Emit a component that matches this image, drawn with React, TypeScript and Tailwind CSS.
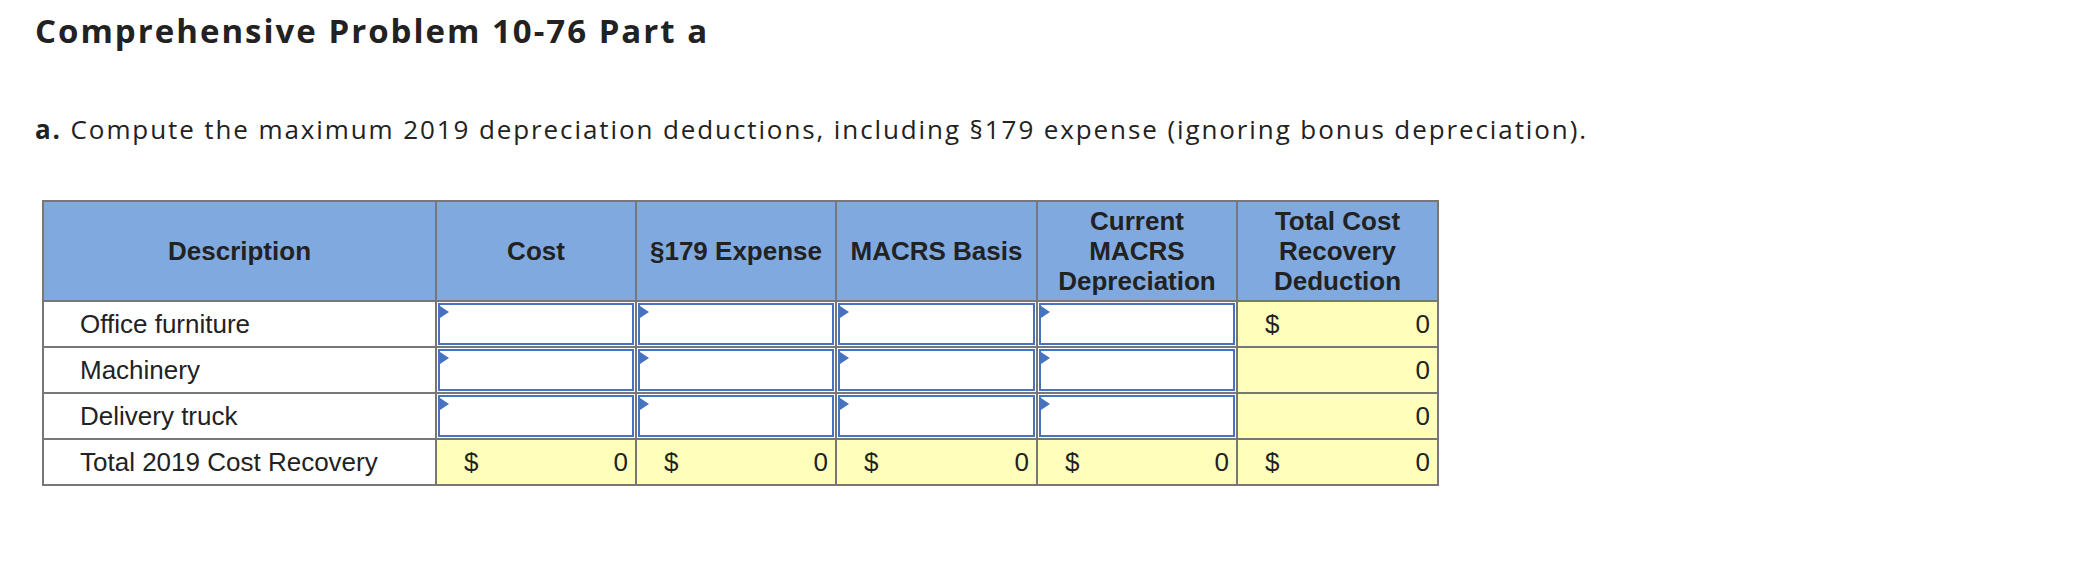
import React from 'react';

const columns = ['Cost', '§179 Expense', 'MACRS Basis', 'Current MACRS Depreciation', 'Total Cost Recovery Deduction'];

const rows = [
  { label: 'Office furniture', showDollar: true },
  { label: 'Machinery', showDollar: false },
  { label: 'Delivery truck', showDollar: false },
];

function InputCell() {
  return (
    <div className="bg-white p-px">
      <div className="relative h-full border-2 border-[#4673bd] bg-white">
        {/* little flag marking an entry field */}
        <span className="absolute left-0 top-[1px] h-0 w-0 border-y-[6px] border-l-[9px] border-y-transparent border-l-[#4673bd]" />
      </div>
    </div>
  );
}

function AmountCell({ dollar, value }: { dollar: boolean; value: string }) {
  return (
    <div className="flex items-center justify-between bg-[#ffffbb] pl-[27px] pr-[7px]">
      <span>{dollar ? '$' : ''}</span>
      <span>{value}</span>
    </div>
  );
}

export default function App() {
  return (
    <div className="min-h-[582px] w-[2084px] bg-white pl-[35px] pt-[11px] text-[#222]">
      <h1 className="font-['Open_Sans',sans-serif] text-[33px] font-bold leading-[40px] tracking-[2px]">
        Comprehensive Problem 10-76 Part a
      </h1>

      <p className="mt-[62px] font-['Open_Sans',sans-serif] text-[26px] leading-[32px] tracking-[1.9px]">
        <span className="font-bold">a.</span> Compute the maximum 2019 depreciation deductions, including §179 expense (ignoring bonus depreciation).
      </p>

      <div className="ml-[7px] mt-[55px] inline-grid grid-cols-[391px_198px_198px_199px_198px_199px] grid-rows-[98px_44px_44px_44px_44px] gap-[2px] bg-[#777] p-[2px] font-['Liberation_Sans',Arial,sans-serif] text-[26px] leading-[30px]">
        {/* header */}
        <div className="flex items-center justify-center bg-[#80aadf] font-bold">Description</div>
        {columns.map((c) => (
          <div key={c} className="flex items-center justify-center bg-[#80aadf] px-1 text-center font-bold">
            {c}
          </div>
        ))}

        {/* input rows */}
        {rows.map((r) => (
          <React.Fragment key={r.label}>
            <div className="flex items-center bg-white pl-[36px]">{r.label}</div>
            <InputCell />
            <InputCell />
            <InputCell />
            <InputCell />
            <AmountCell dollar={r.showDollar} value="0" />
          </React.Fragment>
        ))}

        {/* totals */}
        <div className="flex items-center bg-white pl-[36px]">Total 2019 Cost Recovery</div>
        {columns.map((c) => (
          <AmountCell key={c} dollar value="0" />
        ))}
      </div>
    </div>
  );
}
